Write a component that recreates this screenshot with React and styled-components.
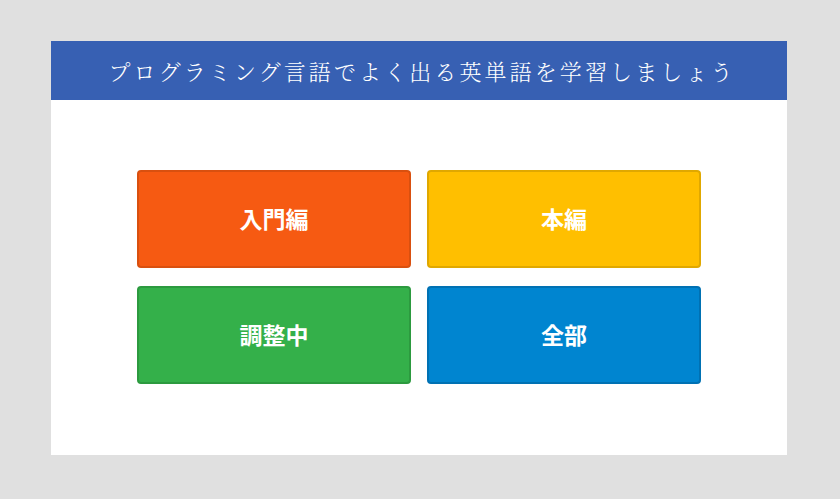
import React from 'react';
import styled, { createGlobalStyle } from 'styled-components';

const GlobalStyle = createGlobalStyle`
    html, body {
        margin: 0;
        padding: 0;
        background: #e0e0e0;
    }
    body {
        font-family: "Noto Sans CJK JP", sans-serif;
    }
`

const Page = styled.div`
    width: 840px;
    height: 499px;
    padding: 41px 0 0 51px;
    box-sizing: border-box;
    display: flex;
    align-items: flex-start;
`

const Card = styled.main`
    width: 736px;
    background: #ffffff;
    display: flex;
    flex-direction: column;
`

const Header = styled.header`
    height: 59px;
    background: #3760b3;
    display: flex;
    align-items: center;
    justify-content: center;
`

const Title = styled.h1`
    margin: 0;
    color: #ffffff;
    font-family: "Noto Serif CJK JP", "Noto Sans CJK JP", serif;
    font-weight: 300;
    font-size: 22px;
    letter-spacing: 3.1px;
    padding-left: 6px;
`

const Menu = styled.nav`
    display: grid;
    grid-template-columns: repeat(2, 274px);
    grid-auto-rows: 98px;
    column-gap: 16px;
    row-gap: 18px;
    justify-content: center;
    padding: 70px 0 71px;
`

const MenuButton = styled.button`
    background: ${(p) => p.color};
    border: 2px solid ${(p) => p.edge};
    border-radius: 4px;
    color: #ffffff;
    font-family: "Noto Sans CJK JP", sans-serif;
    font-weight: 700;
    font-size: 23px;
    cursor: pointer;
    display: flex;
    align-items: center;
    justify-content: center;
    padding: 0 0 2px;
`

const items = [
    { label: '入門編', color: '#f65a12', edge: '#d9500f' },
    { label: '本編', color: '#ffbf00', edge: '#e0a800' },
    { label: '調整中', color: '#34b04a', edge: '#2c9a3f' },
    { label: '全部', color: '#0085d0', edge: '#0071b3' },
];

function App() {
    return (
        <>
            <GlobalStyle />
            <Page>
                <Card>
                    <Header>
                        <Title>プログラミング言語でよく出る英単語を学習しましょう</Title>
                    </Header>
                    <Menu>
                        {items.map((item) => (
                            <MenuButton key={item.label} color={item.color} edge={item.edge}>
                                {item.label}
                            </MenuButton>
                        ))}
                    </Menu>
                </Card>
            </Page>
        </>
    );
}

export default App;
